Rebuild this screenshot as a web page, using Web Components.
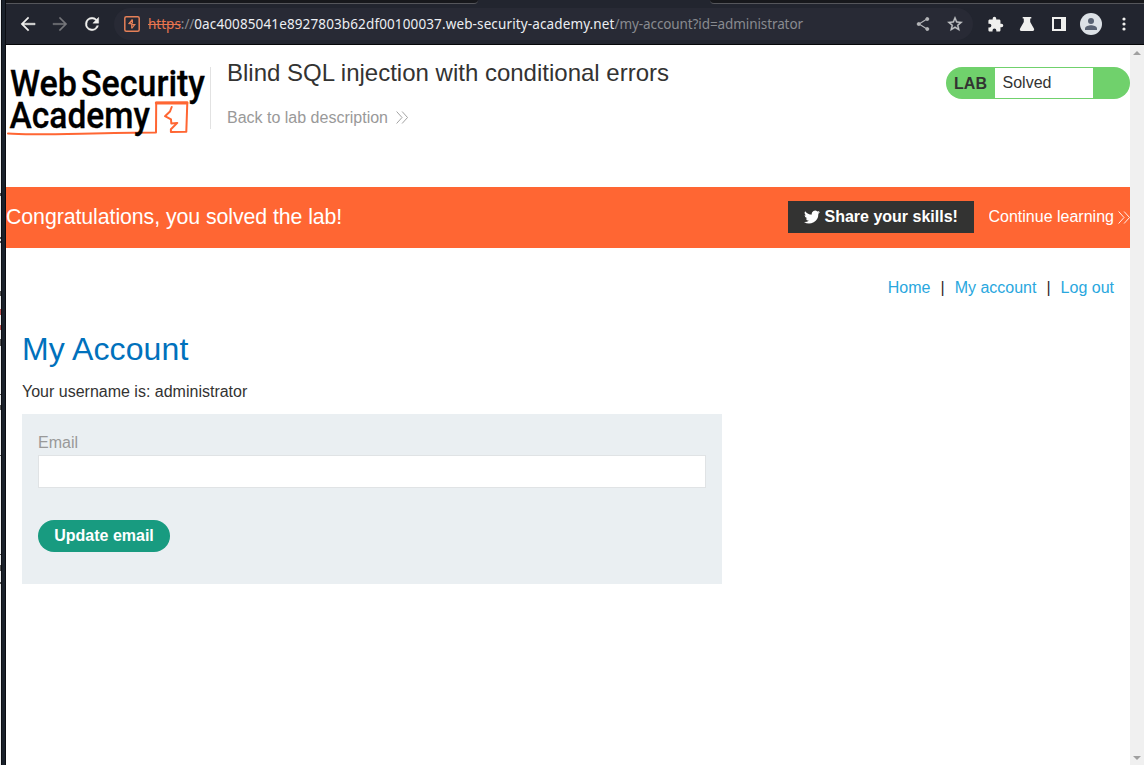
<!DOCTYPE html>
<html lang="en">
<head>
<meta charset="utf-8">
<title>Blind SQL injection with conditional errors</title>
<style>
html, body { margin: 0; height: 100%; overflow: hidden; background: #fff; font: 16px/20px "Liberation Sans", Arial, sans-serif; color: #333332; }
</style>
</head>
<body>
<browser-window></browser-window>
<script>
function define(name, html) {
  const t = document.createElement('template');
  t.innerHTML = html;
  customElements.define(name, class extends HTMLElement {
    constructor() {
      super();
      this.attachShadow({ mode: 'open' }).append(t.content.cloneNode(true));
    }
  });
}

define('window-edge', `
<style>
:host { display: flex; width: 6px; }
svg { display: block; flex: none; }
div { flex: 1; box-sizing: border-box; background: #1a212b; border-left: 1px solid #0b0d12; border-right: 1px solid #0b0d12; }
</style>
<svg width="1" height="765" viewBox="0 0 1 765"><path fill="#eceef0" d="M0 0h1v765H0z"/><path fill="#555" d="M0 193h1v3H0zM0 237h1v2H0zM0 241h1v2H0zM0 291h1v5H0zM0 339h1v7H0zM0 394h1v1H0zM0 405h1v5H0zM0 455h1v1H0zM0 554h1v1H0zM0 565h1v6H0zM0 582h1v2H0z"/><path fill="#b55" d="M0 309h1v6H0zM0 325h1v5H0z"/></svg>
<div></div>`);

define('tab-strip', `
<style>
:host { display: flex; height: 4px; background: #22252f; }
.l, .r { box-sizing: border-box; height: 4px; background: #17181c; border-bottom: 1px solid #55565b; }
.l { width: 472px; border-bottom-right-radius: 4px; }
.r { margin-left: 232px; flex: 1; border-bottom-left-radius: 4px; }
</style><div class="l"></div><div class="r"></div>`);

define('address-bar', `
<style>
:host { display: flex; align-items: center; box-sizing: border-box; width: 859px; height: 32px; border-radius: 16px; background: #282a35; padding: 0 9px 0 10px; font: 13.5px/20px "Noto Sans", sans-serif; color: #898b90; }
svg { display: block; flex: none; }
.url { margin-left: 8px; flex: 1; white-space: pre; letter-spacing: -.1px; }
s { color: #e8754f; letter-spacing: 0; } b { font-weight: 400; color: #eceef2; letter-spacing: .125px; }
.share { margin-right: 14px; }
</style>
<svg width="16" height="16" viewBox="0 0 16 16" fill="none" stroke="#e58058"><rect x=".8" y=".8" width="14.4" height="14.4" rx="1.5" stroke-width="1.5"/><path d="M8.400 3.500V7L5 7.500M8.400 3.500L5 7.500L8 8M7.700 12.500V8.500L10.800 8.600L7.700 12.500" stroke-width="1.200"/></svg>
<span class="url"><s>https</s>://<b>0ac40085041e8927803b62df00100037.web-security-academy.net</b>/my-account?id=administrator</span>
<svg class="share" width="18" height="18" viewBox="0 0 18 18" fill="#b4b5b8" stroke="#b4b5b8"><path d="M13 4 5 9l8 5" fill="none" stroke-width="1.2"/><circle cx="13.3" cy="4" r="1.5"/><circle cx="4.700" cy="9" r="1.500"/><circle cx="13.3" cy="14" r="1.5"/></svg>
<svg width="18" height="18" viewBox="0 0 24 24" fill="#c2c3c6"><path d="m22 9.24-7.19-.62L12 2 9.19 8.63 2 9.24l5.46 4.73L5.82 21 12 17.27 18.18 21l-1.63-7.03L22 9.24zM12 15.4l-3.76 2.27 1-4.28-3.32-2.88 4.38-.38L12 6.1l1.71 4.04 4.38.38-3.32 2.88 1 4.28L12 15.4z" stroke="#c2c3c6" stroke-width=".5"/></svg>`);

define('browser-toolbar', `
<style>
:host { display: flex; align-items: center; height: 40px; background: #22252f; border-bottom: 1px solid #050608; box-sizing: content-box; }
svg { display: block; flex: none; }
.nav { display: flex; gap: 12px; padding-left: 12px; width: 96px; }
.ext { display: flex; align-items: center; margin-left: 13.500px; }
</style>
<div class="nav">
<svg width="20" height="20" viewBox="0 0 24 24" fill="#f0f0ee" stroke="#f0f0ee" stroke-width=".5"><path d="M20.5 11H7l6.2-6.2L12 3.5 3.5 12l8.5 8.5 1.3-1.3L7 13h13.5z"/></svg>
<svg width="20" height="20" viewBox="0 0 24 24" fill="#76777b" stroke="#76777b" stroke-width=".3"><path d="M3.5 11H17l-6.2-6.2L12 3.5l8.5 8.5-8.5 8.5-1.3-1.3L17 13H3.5z"/></svg>
<svg width="20" height="20" viewBox="0 0 24 24" fill="#f0f0ee" stroke="#f0f0ee" stroke-width=".5"><path d="M17.65 6.35A7.96 7.96 0 0 0 12 4a8 8 0 1 0 7.73 10h-2.08A6 6 0 1 1 12 6c1.66 0 3.14.69 4.22 1.78L13 11h7V4z"/></svg>
</div>
<address-bar></address-bar>
<div class="ext">
<svg width="17" height="17" viewBox="0 0 24 24" fill="#f0f0ee"><path d="M20.5 11H19V7c0-1.1-.9-2-2-2h-4V3.500a2.500 2.500 0 0 0-5 0V5H4c-1.100 0-2 .9-2 2v3.800h1.500a2.700 2.700 0 0 1 0 5.400H2V20c0 1.100.9 2 2 2h3.800v-1.500a2.700 2.700 0 0 1 5.400 0V22H17c1.100 0 2-.9 2-2v-4h1.500a2.500 2.500 0 0 0 0-5z"/></svg>
<svg style="margin-left:15.500px" width="16" height="16" viewBox="0 0 16 16" fill="#f0f0ee"><path d="M3.700 1h8.600v1.500h-1.100V6l3.700 6.600c.7 1.300 0 2.400-1.200 2.400H2.300C1.100 15 .4 13.900 1.100 12.600L4.800 6V2.500H3.700z"/></svg>
<svg style="margin-left:17px" width="14" height="14" viewBox="0 0 14 14"><path fill="#f0f0ee" fill-rule="evenodd" d="M0 0h14v14H0zM2 2v10h7V2z"/></svg>
<svg style="margin-left:14px" width="22" height="22" viewBox="0 0 22 22"><circle cx="11" cy="11" r="11" fill="#dce1e6"/><circle cx="11" cy="8" r="3" fill="#596273"/><path fill="#596273" d="M5 17v-1.700c0-2 3.800-3.100 6-3.100s6 1.100 6 3.100V17z"/></svg>
<svg style="margin-left:19.500px" width="4" height="14" viewBox="0 0 4 14" fill="#f0f0ee"><circle cx="2" cy="2" r="1.600"/><circle cx="2" cy="7" r="1.600"/><circle cx="2" cy="12" r="1.600"/></svg>
</div>`);

define('academy-logo', `
<style>
:host { display: block; width: 204px; height: 80px; }
svg { display: block; overflow: visible; }
text { font-family: Roboto, sans-serif; font-weight: 500; font-size: 37px; }
</style>
<svg width="204" height="80" viewBox="6 60 204 80" fill="none">
<g stroke="#ff6633" stroke-linejoin="round" stroke-linecap="round"><path stroke-width="2" d="M8 133.600C34 136 92 132.500 156 132.500L156.200 102.800L187.300 102.600L186.300 131.700L170.900 131.900L170.900 129.300L177.300 122.900L171.300 123.500L171 119.300L165 116.200L170 111.500L171.700 107"/><path stroke-width="2.800" d="M156.200 103H187"/></g>
<g fill="#000" stroke="#000" stroke-width=".3"><text x="10" y="95.500" textLength="67" lengthAdjust="spacingAndGlyphs">Web</text>
<text x="81" y="95.500" textLength="124" lengthAdjust="spacingAndGlyphs">Security</text>
<text x="9.500" y="128" textLength="140.500" lengthAdjust="spacingAndGlyphs">Academy</text></g>
</svg>`);

define('double-chevron', `
<style>:host { display: inline-block; width: 12px; height: 13px; } svg { display: block; }</style>
<svg width="12" height="13" viewBox="0 0 12 13" fill="none" stroke="currentColor" stroke-width=".9"><path d="M.6.500 6 6.500.6 12.500M6.100.500l5.400 6-5.400 6"/></svg>`);

define('lab-status', `
<style>
:host { display: flex; box-sizing: border-box; width: 184px; height: 32px; border-radius: 16px; background: #70d16c; padding: 1px 0; line-height: 30px; }
b { width: 49px; text-align: center; line-height: 32px; }
.s { width: 98px; box-sizing: border-box; padding-left: 7.500px; background: #fff; }
</style><b>LAB</b><div class="s"><slot></slot></div>`);

define('lab-header', `
<style>
:host { display: flex; height: 142px; box-sizing: border-box; padding-top: 15px; }
.t { height: 62px; margin-top: 7px; border-left: 1px solid #e2e2e2; padding-left: 16px; flex: 1; }
h2 { margin: 0; font: 24px/28px "Liberation Sans", sans-serif; margin-top: -8px; }
.back { display: flex; align-items: flex-start; gap: 8.500px; color: #999; margin-top: 21px; line-height: 20px; }
.back double-chevron { margin-top: 3px; }
lab-status { margin-top: 7px; }
</style>
<academy-logo></academy-logo>
<div class="t"><h2>Blind SQL injection with conditional errors</h2><div class="back"><span>Back to lab description</span><double-chevron></double-chevron></div></div>
<lab-status>Solved</lab-status>`);

define('solved-banner', `
<style>
:host { display: flex; align-items: center; box-sizing: border-box; height: 61px; padding-bottom: 1px; background: #ff6633; color: #fff; }
.c { font-size: 21.333px; letter-spacing: -.08px; flex: 1; line-height: 24px; }
.share { display: flex; align-items: center; box-sizing: border-box; width: 186px; height: 32px; padding-left: 16px; gap: 4.500px; background: #333332; font-weight: 700; white-space: nowrap; }
.n { display: flex; align-items: center; gap: 4px; margin-left: 14.500px; width: 141.500px; overflow: hidden; white-space: nowrap; }
.n double-chevron { flex: none; }
svg { flex: none; }
</style>
<div class="c">Congratulations, you solved the lab!</div>
<div class="share"><svg width="16" height="14" viewBox="0 2 24 20" fill="#fff"><path d="M24 4.600a10 10 0 0 1-2.800.8 4.900 4.900 0 0 0 2.100-2.700 10 10 0 0 1-3.100 1.200 4.900 4.900 0 0 0-8.400 4.500A14 14 0 0 1 1.700 3.200a4.900 4.900 0 0 0 1.500 6.500 5 5 0 0 1-2.200-.6 4.900 4.900 0 0 0 3.900 4.900 5 5 0 0 1-2.200.1 4.900 4.900 0 0 0 4.600 3.400A10 10 0 0 1 0 19.500 14 14 0 0 0 21.500 7.100 10 10 0 0 0 24 4.600z"/></svg><span>Share your skills!</span></div>
<div class="n"><span>Continue learning</span><double-chevron></double-chevron></div>`);

define('account-nav', `
<style>
:host { display: flex; justify-content: flex-end; padding: 30px 16px 0 0; height: 20px; color: #331f26; }
a { color: #29a7de; } i { font-style: normal; margin: 0 10px; }
</style><a>Home</a><i>|</i><a>My account</a><i>|</i><a>Log out</a>`);

define('email-form', `
<style>
:host { display: block; box-sizing: border-box; width: 700px; height: 170px; padding: 19px 16px; background: #eaeff2; }
label { display: block; color: #999; line-height: 20px; }
input { display: block; box-sizing: border-box; width: 668px; height: 33px; margin: 2px 0 32px; border: 1px solid #e0e3e5; background: #fff; outline: 0; padding: 0 8px; font: inherit; border-radius: 0; }
button { display: block; width: 132px; height: 32px; padding: 0; border: 0; border-radius: 16px; background: #189b80; color: #fff; font: bold 16px/32px "Liberation Sans", sans-serif; }
</style><label>Email</label><input type="email" aria-label="Email"><button>Update email</button>`);

define('account-section', `
<style>
:host { display: block; padding: 32px 16px 0; }
h1 { margin: 0; font: 32px/38px "Liberation Sans", sans-serif; letter-spacing: .1px; color: #0071bc; }
p { margin: 14px 0 12px; line-height: 20px; }
</style><h1>My Account</h1><p>Your username is: administrator</p><email-form></email-form>`);

define('scroll-track', `
<style>
:host { display: flex; flex-direction: column; justify-content: space-between; align-items: center; box-sizing: border-box; width: 14px; padding: 6px 0 5px; background: #f0f0f0; }
svg { display: block; }
</style>
<svg width="8" height="4" viewBox="0 0 8 4" fill="#a0a0a0"><path d="M4 0 8 4H0z"/></svg>
<svg width="8" height="4" viewBox="0 0 8 4" fill="#a0a0a0"><path d="M0 0h8L4 4z"/></svg>`);

define('browser-window', `
<style>
:host { display: flex; width: 1144px; height: 765px; }
.main { width: 1138px; display: flex; flex-direction: column; }
.view { display: flex; flex: 1; background: #fff; }
.page { width: 1124px; }
</style>
<window-edge></window-edge>
<div class="main"><tab-strip></tab-strip><browser-toolbar></browser-toolbar>
<div class="view"><div class="page"><lab-header></lab-header><solved-banner></solved-banner><account-nav></account-nav><account-section></account-section></div><scroll-track></scroll-track></div></div>`);
</script>
</body>
</html>
